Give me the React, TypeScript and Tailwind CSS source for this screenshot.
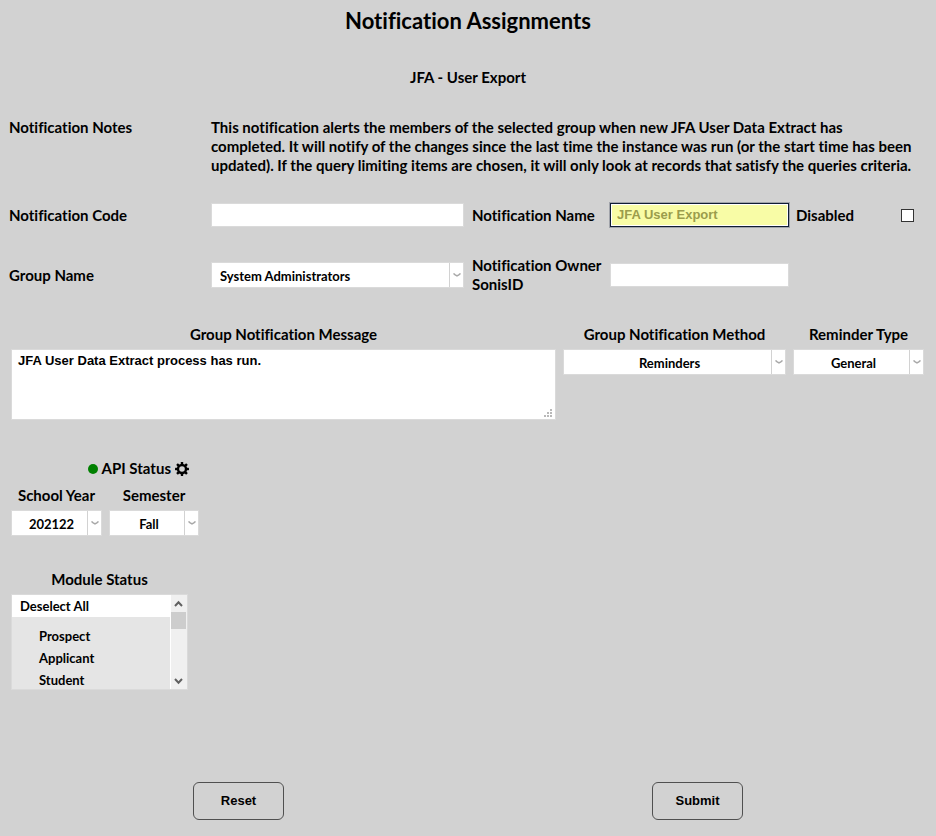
import type { ReactNode } from "react";

const fieldBase = "block h-6 w-full border border-[#dadada] bg-white px-[6px] text-[13px] font-bold outline-none";
const moduleOption = "min-h-0 py-[3px] pr-0 pl-[27px] text-[13px] leading-4 font-bold";
const actionButton = "h-[38px] w-[91px] rounded-[6px] border border-[#505050] pb-[2px]";

function Chevron() {
  return (
    <svg viewBox="0 0 8 4" className="h-1 w-2" fill="none" stroke="#a8a8a8" strokeWidth="1.5">
      <path d="M0.5 0.5 L2.2 1.8 L4 2.9 L5.8 1.8 L7.5 0.5" />
    </svg>
  );
}

function Dropdown({ id, value, centered = false }: { id: string; value: string; centered?: boolean }) {
  return (
    <div className="relative h-[26px] w-full">
      <select
        id={id}
        defaultValue={value}
        className={
          "h-full w-full appearance-none rounded-none border border-[#dadada] bg-white pt-[2px] text-[13px] leading-[20px] font-bold outline-none " +
          (centered ? "pr-[18px] pl-2 text-center" : "pr-[22px] pl-2 text-left")
        }
      >
        <option>{value}</option>
      </select>
      <span className="pointer-events-none absolute inset-y-px right-px flex w-[14px] items-center justify-center border-l border-[#d2d2d2]">
        <Chevron />
      </span>
    </div>
  );
}

function Labelled({ id, label, className, children }: { id: string; label: string; className: string; children: ReactNode }) {
  return (
    <div className={className}>
      <label htmlFor={id} className="block pb-[5px] text-center">
        {label}
      </label>
      {children}
    </div>
  );
}

function GearIcon() {
  return (
    <svg viewBox="0 0 14 14" className="h-[14px] w-[14px]">
      <g fill="#000">
        <rect x="5.8" y="0" width="2.4" height="14" rx="0.4" />
        <rect x="5.8" y="0" width="2.4" height="14" rx="0.4" transform="rotate(45 7 7)" />
        <rect x="5.8" y="0" width="2.4" height="14" rx="0.4" transform="rotate(90 7 7)" />
        <rect x="5.8" y="0" width="2.4" height="14" rx="0.4" transform="rotate(135 7 7)" />
        <circle cx="7" cy="7" r="5.2" />
      </g>
      <circle cx="7" cy="7" r="2.8" fill="#d2d2d2" />
    </svg>
  );
}

function ModuleList() {
  return (
    <div className="flex h-24 w-full border border-[#dadada] bg-[#e5e5e5]">
      <select
        id="module-status"
        multiple
        className="h-full min-w-0 flex-1 appearance-none overflow-y-auto rounded-none border-0 bg-[#e5e5e5] p-0 text-[13px] font-bold outline-none [scrollbar-width:none]"
      >
        <option className="mb-2 min-h-0 bg-white py-[3px] pr-0 pl-2 text-[13px] leading-4 font-bold">Deselect All</option>
        <option className={moduleOption}>Prospect</option>
        <option className={moduleOption}>Applicant</option>
        <option className={moduleOption}>Student</option>
      </select>
      <div className="flex w-[17px] flex-col items-center border-l border-white bg-[#f0f0f0] pr-px" aria-hidden="true">
        <svg viewBox="0 0 15 17" className="h-[17px] w-[15px]" fill="none" stroke="#606060" strokeWidth="2">
          <path d="M4 11 L7.5 7.3 L11 11" />
        </svg>
        <div className="h-[17px] w-full bg-[#cdcdcd]" />
        <svg viewBox="0 0 15 17" className="mt-auto h-[17px] w-[15px]" fill="none" stroke="#606060" strokeWidth="2">
          <path d="M4 7 L7.5 10.7 L11 7" />
        </svg>
      </div>
    </div>
  );
}

export default function App() {
  return (
    <main className="min-h-screen bg-[#d2d2d2] px-[9px] pb-4 font-[Lato,'Liberation_Sans',sans-serif] text-[15px] leading-[19px] font-bold text-black [font-variant-ligatures:none]">
      <h1 className="pt-2 text-center text-[22px] leading-[26px] font-bold">Notification Assignments</h1>
      <h2 className="mt-[34px] text-center">JFA - User Export</h2>

      <div className="mt-[31px] grid grid-cols-[202px_1fr]">
        <span>Notification Notes</span>
        <p className="-mr-1">
          This notification alerts the members of the selected group when new JFA User Data Extract has
          <br />
          completed. It will notify of the changes since the last time the instance was run (or the start time has been
          <br />
          updated). If the query limiting items are chosen, it will only look at records that satisfy the queries criteria.
        </p>
      </div>

      <div className="mt-[28px] grid grid-cols-[202px_minmax(0,1fr)_8px_138px_179px_7px_131px] items-center gap-y-[29px]">
        <label htmlFor="code">Notification Code</label>
        <input id="code" className={fieldBase} />
        <span />
        <label htmlFor="name">Notification Name</label>
        <input
          id="name"
          defaultValue="JFA User Export"
          className="block h-6 w-full border border-[#101c34] bg-[#f8fca6] px-[6px] pb-px font-['Liberation_Sans',sans-serif] text-[13px] font-bold text-[#9b9d4c] shadow-[0_0_0_1px_#a0a3aa,inset_0_0_0_1px_#ffffff] outline-none"
        />
        <span />
        <div className="flex items-center justify-between pr-[13px]">
          <label htmlFor="disabled">Disabled</label>
          <input
            id="disabled"
            type="checkbox"
            className="h-[13px] w-[13px] appearance-none border border-[#333] bg-white checked:bg-[#333]"
          />
        </div>

        <label htmlFor="group">Group Name</label>
        <Dropdown id="group" value="System Administrators" />
        <span />
        <label htmlFor="owner">Notification Owner SonisID</label>
        <input id="owner" className={fieldBase} />
      </div>

      <div className="mt-[31px] flex gap-[7px] pr-[3px] pl-[2px]">
        <Labelled id="message" label="Group Notification Message" className="min-w-0 flex-1">
          <div className="relative">
            <textarea
              id="message"
              defaultValue="JFA User Data Extract process has run."
              className="block h-[71px] w-full resize-none border border-[#dadada] bg-white px-[6px] py-[2px] font-['Liberation_Sans',sans-serif] text-[13px] leading-[18px] font-bold outline-none"
            />
            <svg viewBox="0 0 8 8" className="pointer-events-none absolute right-1 bottom-[3px] h-2 w-2" fill="#b9b9b9">
              <path d="M6 0h2v2H6zM3 3h2v2H3zM6 3h2v2H6zM0 6h2v2H0zM3 6h2v2H3zM6 6h2v2H6z" />
            </svg>
          </div>
        </Labelled>
        <Labelled id="method" label="Group Notification Method" className="w-[223px]">
          <Dropdown id="method" value="Reminders" centered />
        </Labelled>
        <Labelled id="reminder" label="Reminder Type" className="w-[131px]">
          <Dropdown id="reminder" value="General" centered />
        </Labelled>
      </div>

      <div className="mt-[39px] flex w-[180px] items-center justify-end gap-1">
        <span className="h-[10px] w-[10px] rounded-full bg-[#008000]" />
        <span>API Status</span>
        <button type="button" aria-label="API settings">
          <GearIcon />
        </button>
      </div>

      <div className="mt-2 flex gap-[7px] pl-[2px]">
        <Labelled id="year" label="School Year" className="w-[91px]">
          <Dropdown id="year" value="202122" centered />
        </Labelled>
        <Labelled id="semester" label="Semester" className="w-[90px]">
          <Dropdown id="semester" value="Fall" centered />
        </Labelled>
      </div>

      <div className="mt-[34px] pl-[2px]">
        <Labelled id="module-status" label="Module Status" className="w-[177px]">
          <ModuleList />
        </Labelled>
      </div>

      <div className="mt-[92px] grid grid-cols-2 justify-items-center font-['Liberation_Sans',sans-serif] text-[13px]">
        <button type="reset" className={actionButton}>
          Reset
        </button>
        <button type="submit" className={actionButton}>
          Submit
        </button>
      </div>
    </main>
  );
}
